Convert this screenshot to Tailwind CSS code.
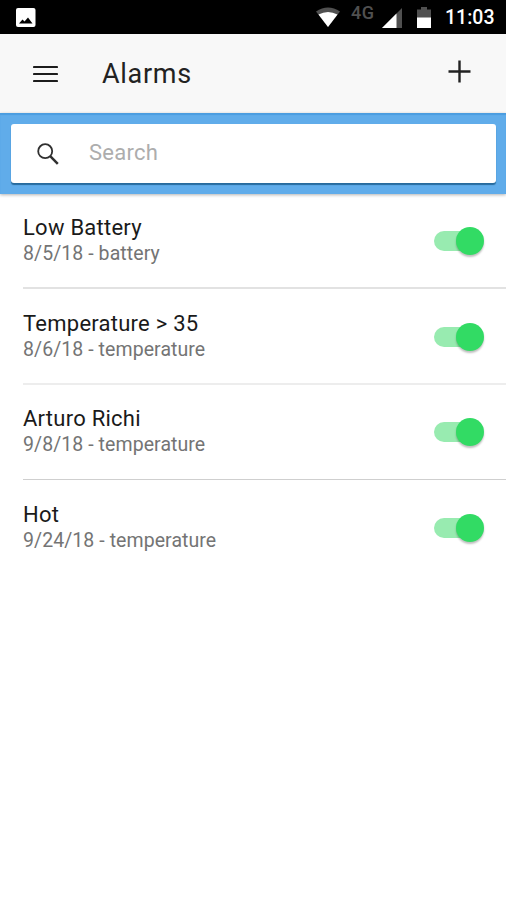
<!DOCTYPE html>
<html lang="en">
  <head>
    <meta charset="UTF-8" />
    <meta name="viewport" content="width=device-width, initial-scale=1.0" />
    <title>Alarms</title>
    <script src="https://cdn.jsdelivr.net/npm/@tailwindcss/browser@4"></script>
  </head>
  <body class="h-screen overflow-hidden bg-white font-['Roboto',sans-serif] text-black">
    <!-- Status bar -->
    <div class="flex h-[34px] items-start bg-black pr-[11px] pl-4 text-white">
      <svg class="mt-2 h-[19px] w-5" viewBox="0 0 20 19">
        <rect width="19.5" height="19" rx="2" fill="#fff" />
        <path d="M3 15.5 6.5 11.5 8.5 13.5 12 9.5 16.5 15.5Z" fill="#000" />
      </svg>
      <svg class="mt-[7px] ml-auto h-5 w-6" viewBox="0 0 24 20">
        <path d="M0 4.5Q12-3.5 24 4.5L12 20Z" fill="#505050" />
        <path d="M2.5 7.5Q12 2.5 21.5 7.5L12 20Z" fill="#fff" />
      </svg>
      <span class="mt-[3px] ml-[11px] w-6 text-lg leading-5 font-medium tracking-[0.5px] text-[#505050]">4G</span>
      <svg class="mt-2 ml-[7px] h-5 w-5" viewBox="0 0 20 20">
        <path d="M0 20 20 0V20Z" fill="#505050" />
        <path d="M0 20 14.5 5.5V20Z" fill="#fff" />
      </svg>
      <svg class="mt-[7px] ml-[15px] h-[21px] w-[14px]" viewBox="0 0 14 21">
        <path d="M0 2.5H4V0H10V2.5H14V11H0Z" fill="#505050" />
        <path d="M0 10.5H14V21H0Z" fill="#fff" />
      </svg>
      <span class="mt-2 ml-[14px] w-[50px] text-[19.5px] leading-5 font-medium whitespace-nowrap">11:03</span>
    </div>

    <!-- Toolbar -->
    <header class="flex h-[79px] items-center bg-[#f8f8f8] pr-[35px] pl-[33px]">
      <svg class="h-[18px] w-[25px]" viewBox="0 0 25 18" stroke="#1c1c1c" stroke-width="2.2" stroke-linecap="round">
        <path d="M1 2H24M1 9H24M1 16H24" />
      </svg>
      <h1 class="ml-11 text-[27px] leading-8 tracking-[0.7px] text-[#222]">Alarms</h1>
      <svg class="-mt-1 ml-auto h-[23px] w-[23px]" viewBox="0 0 23 23" stroke="#222" stroke-width="2.4">
        <path d="M.5 11.5H22.5M11.5 .5V22.5" />
      </svg>
    </header>

    <!-- Search -->
    <div class="h-[81px] bg-[#60acea] pt-[11px] pr-[10px] pl-[11px] shadow-[inset_0_2px_1px_#4b9de0,0_1px_3px_rgba(0,0,0,0.3)]">
      <div class="flex h-[59px] items-center rounded-[3px] bg-white pl-[26px] shadow-[0_2px_1px_#276b9e]">
        <svg class="h-[22px] w-[22px]" viewBox="0 0 22 22" fill="none" stroke="#303030">
          <circle cx="8.2" cy="8.2" r="7" stroke-width="1.8" />
          <path d="M13.2 13.2 20.8 20.8" stroke-width="2.5" />
        </svg>
        <span class="-mt-px ml-[30px] text-[22px] leading-7 tracking-[0.25px] text-[#adadad]">Search</span>
      </div>
    </div>

    <!-- Alarm list -->
    <ul class="pt-px pl-[23px]">
      <li class="flex h-[94px] items-center justify-between border-b-2 border-[#e2e2e2] pr-[22px]">
        <div>
          <h2 class="text-[22px] leading-[26px] tracking-[0.25px] text-[#1a1a1a]">Low Battery</h2>
          <p class="text-[19.5px] leading-[26px] tracking-[0.07px] text-[#747474]">8/5/18 - battery</p>
        </div>
        <div class="flex h-5 w-[50px] items-center justify-end rounded-full bg-[linear-gradient(90deg,#98ebb0_44px,transparent_44px)]">
          <span class="h-7 w-7 rounded-full bg-[#32db64] shadow-[0_2px_2px_rgba(0,0,0,0.25)]"></span>
        </div>
      </li>
      <li class="flex h-24 items-center justify-between border-b-2 border-[#ededed] pt-0.5 pr-[22px]">
        <div>
          <h2 class="text-[22px] leading-[26px] tracking-[0.25px] text-[#1a1a1a]">Temperature &gt; 35</h2>
          <p class="text-[19.5px] leading-[26px] tracking-[0.07px] text-[#747474]">8/6/18 - temperature</p>
        </div>
        <div class="flex h-5 w-[50px] items-center justify-end rounded-full bg-[linear-gradient(90deg,#98ebb0_44px,transparent_44px)]">
          <span class="h-7 w-7 rounded-full bg-[#32db64] shadow-[0_2px_2px_rgba(0,0,0,0.25)]"></span>
        </div>
      </li>
      <li class="flex h-[95px] items-center justify-between border-b border-[#cfcfcf] pr-[22px]">
        <div>
          <h2 class="text-[22px] leading-[26px] tracking-[0.25px] text-[#1a1a1a]">Arturo Richi</h2>
          <p class="text-[19.5px] leading-[26px] tracking-[0.07px] text-[#747474]">9/8/18 - temperature</p>
        </div>
        <div class="flex h-5 w-[50px] items-center justify-end rounded-full bg-[linear-gradient(90deg,#98ebb0_44px,transparent_44px)]">
          <span class="h-7 w-7 rounded-full bg-[#32db64] shadow-[0_2px_2px_rgba(0,0,0,0.25)]"></span>
        </div>
      </li>
      <li class="flex h-24 items-center justify-between pr-[22px]">
        <div>
          <h2 class="text-[22px] leading-[26px] tracking-[0.25px] text-[#1a1a1a]">Hot</h2>
          <p class="text-[19.5px] leading-[26px] tracking-[0.07px] text-[#747474]">9/24/18 - temperature</p>
        </div>
        <div class="flex h-5 w-[50px] items-center justify-end rounded-full bg-[linear-gradient(90deg,#98ebb0_44px,transparent_44px)]">
          <span class="h-7 w-7 rounded-full bg-[#32db64] shadow-[0_2px_2px_rgba(0,0,0,0.25)]"></span>
        </div>
      </li>
    </ul>
  </body>
</html>
